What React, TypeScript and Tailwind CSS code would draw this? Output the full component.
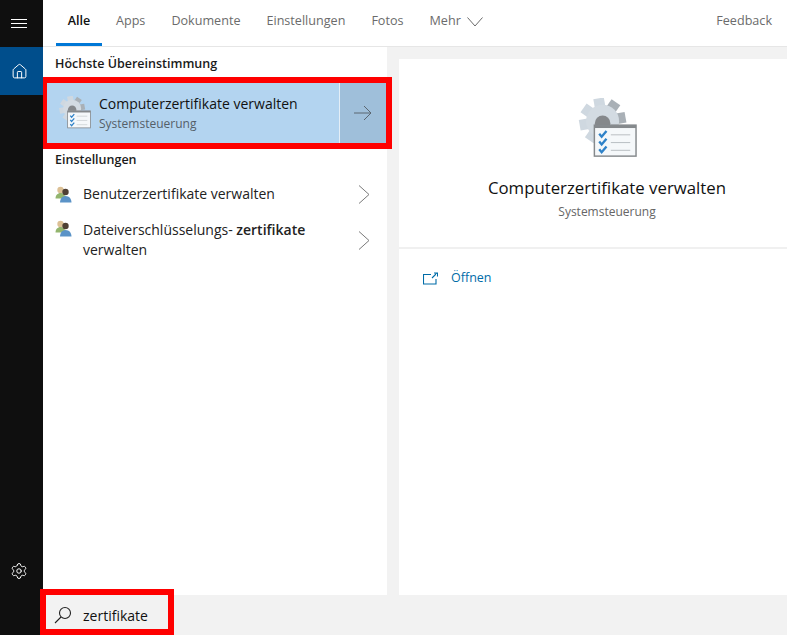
import { Home, Settings } from 'lucide-react';

const tabs = ['Apps', 'Dokumente', 'Einstellungen', 'Fotos'];

// Gear behind a checklist window, used in small and large size
function CertIcon({ size }: { size: number }) {
    const teeth = [0, 45, 90, 135, 180, 225, 270, 315];
    return (
        <svg width={size} height={size} viewBox="0 0 64 64" className="shrink-0">
            {teeth.map(a => (
                <rect
                    key={a}
                    x="23"
                    y="0"
                    width="11"
                    height="12"
                    fill={a > 0 && a < 140 ? '#a9b0b6' : '#cfd8e0'}
                    transform={`rotate(${a - 10} 28.500 24)`}
                />
            ))}
            <circle cx="28.500" cy="24" r="17" fill="#d3dbe2" />
            <circle cx="28.500" cy="26" r="8" fill="#85888b" />
            <rect x="20" y="28" width="43" height="32" fill="#f5f8fa" stroke="#85898c" strokeWidth="1.5" />
            <rect x="20" y="28" width="43" height="3" fill="#85898c" />
            {[37, 45, 53].map(y => (
                <g key={y}>
                    <path d={`M25 ${y}l2.5 3 5-6`} fill="none" stroke="#2f82c8" strokeWidth="2.4" />
                    <path d={`M37 ${y + 1}h20`} stroke="#b8bdc1" strokeWidth="1" />
                </g>
            ))}
        </svg>
    );
}

function UsersIcon() {
    return (
        <svg width="17" height="17" viewBox="0 0 17 17" className="shrink-0">
            <circle cx="5.500" cy="4" r="3.200" fill="#dcc095" />
            <path d="M0.500 12.500c0-3.200 2.200-5.500 5-5.500s5 2.300 5 5.500z" fill="#93b56e" />
            <circle cx="10.500" cy="6" r="3.200" fill="#4f4034" />
            <path d="M5 16.500c0-3.700 2.400-6.500 5.700-6.500s5.800 2.800 5.800 6.500z" fill="#5b93c7" />
        </svg>
    );
}

function RowChevron() {
    return (
        <svg width="12" height="19" viewBox="0 0 12 19" fill="none" stroke="#7a7a7a" strokeWidth="1" className="shrink-0">
            <path d="M1 .5l10 9-10 9" />
        </svg>
    );
}

export default function App() {
    return (
        <div
            className="relative flex h-[635px] w-[787px] overflow-hidden bg-white"
            style={{ fontFamily: '"Open Sans", "Noto Sans", sans-serif' }}
        >
            {/* Sidebar */}
            <aside className="flex w-[43px] shrink-0 flex-col bg-[#0f0f0f] text-white">
                <div className="flex h-[47px] items-center justify-center pr-[5px]">
                    <svg width="16" height="9" viewBox="0 0 16 9" stroke="#fff" strokeWidth="1">
                        <path d="M0 .5h16M0 4.500h16M0 8.500h16" />
                    </svg>
                </div>
                <div className="flex h-[48px] items-center justify-center bg-[#004e8c] pr-[5px]">
                    <Home size={17} strokeWidth={1.4} />
                </div>
                <div className="mt-auto mb-[55px] flex justify-center pr-[5px]">
                    <Settings size={18} strokeWidth={1.3} />
                </div>
            </aside>

            <div className="flex min-w-0 flex-1 flex-col">
                {/* Tabs */}
                <nav className="flex h-[47px] shrink-0 items-stretch border-b border-[#e6e6e6] pr-[15px] pl-[13px] text-[12.6px] text-[#6b6b6b]">
                    <div className="flex w-[46px] items-center justify-center border-b-[3px] border-[#0078d7] font-semibold text-[#111]">
                        Alle
                    </div>
                    {tabs.map((t, i) => (
                        <div key={t} className={`flex items-center pb-[3px] ${i === 0 ? 'ml-[14px]' : 'ml-[26px]'}`}>
                            {t}
                        </div>
                    ))}
                    <div className="ml-[26px] flex items-center gap-[6px] pb-[3px]">
                        Mehr
                        <svg width="16" height="10" viewBox="0 0 16 10" fill="none" stroke="#6b6b6b" strokeWidth="1">
                            <path d="M.5.500l7.500 8.500 7.500-8.500" />
                        </svg>
                    </div>
                    <div className="ml-auto flex items-center pb-[3px]">Feedback</div>
                </nav>

                <div className="flex min-h-0 flex-1 bg-[#f2f2f2]">
                    {/* Results */}
                    <section className="w-[344px] shrink-0 bg-white">
                        <h2 className="mt-[7px] ml-[12px] pt-[1px] text-[12.5px] leading-[18px] font-semibold text-[#1a1a1a]">
                            Höchste Übereinstimmung
                        </h2>
                        <div className="relative z-10 mt-[4px] -mr-[5px] flex h-[72px] border-[6px] border-l-[4px] border-[#ff0000] bg-[#b3d4f0]">
                            <div className="flex flex-1 items-center pl-[10px]">
                                <CertIcon size={34} />
                                <div className="ml-[8px]">
                                    <div className="text-[14px] leading-[20px] text-[#111]">Computerzertifikate verwalten</div>
                                    <div className="mt-[2px] text-[12px] leading-[16px] text-[#555f69]">Systemsteuerung</div>
                                </div>
                            </div>
                            <div className="flex w-[47px] items-center justify-center border-l border-[#e4eef7] bg-[#9fbfda]">
                                <svg width="18" height="16" viewBox="0 0 18 16" fill="none" stroke="#5b6670" strokeWidth="1">
                                    <path d="M0 8h17M10 1l7 7-7 7" />
                                </svg>
                            </div>
                        </div>
                        <h2 className="mt-[2px] ml-[12px] text-[12.5px] leading-[18px] font-semibold text-[#1a1a1a]">
                            Einstellungen
                        </h2>
                        <div className="mt-[15px] flex items-center pr-[17px] pl-[12px] text-[14px] text-[#222]">
                            <UsersIcon />
                            <span className="ml-[11px] flex-1 leading-[20px]">Benutzerzertifikate verwalten</span>
                            <RowChevron />
                        </div>
                        <div className="mt-[16px] flex items-center pr-[17px] pl-[12px] text-[14px] text-[#222]">
                            <div className="self-start">
                                <UsersIcon />
                            </div>
                            <span className="ml-[11px] flex-1 leading-[20px]">
                                Dateiverschlüsselungs- <b className="font-semibold">zertifikate</b>
                                <br />
                                verwalten
                            </span>
                            <RowChevron />
                        </div>
                    </section>

                    {/* Preview */}
                    <section className="mt-[12px] ml-[12px] flex-1 bg-white">
                        <div className="flex h-[190px] flex-col items-center border-b-2 border-[#f0f0f0] pt-[39px] pl-[28px]">
                            <div className="-ml-[3px] h-[62px]">
                                <CertIcon size={62} />
                            </div>
                            <div className="mt-[16px] text-[16.8px] leading-[24px] text-[#111]">Computerzertifikate verwalten</div>
                            <div className="mt-[4px] text-[12px] leading-[16px] text-[#666]">Systemsteuerung</div>
                        </div>
                        <div className="mt-[20px] ml-[24px] flex items-center gap-[13px] text-[12.5px] leading-[18px] text-[#006ca8]">
                            <svg width="15" height="13" viewBox="0 0 15 13" fill="none" stroke="#006ca8" strokeWidth="1.100">
                                <path d="M8 2.500H.5v9.500h12.500V7" />
                                <path d="M9 6l4.500-4.500M11 1h3.500v3.500" />
                            </svg>
                            Öffnen
                        </div>
                    </section>
                </div>

                {/* Search bar */}
                <div className="h-[40px] shrink-0 bg-[#f2f2f2]" />
            </div>

            {/* Red marker around the search box */}
            <div className="absolute top-[589px] left-[40px] flex h-[46px] w-[134px] items-center border-[6px] border-[#ff0000] bg-[#f2f2f2] pt-[6px] pl-[7px] text-[14px] text-[#111]">
                <svg width="20" height="20" viewBox="0 0 20 20" fill="none" stroke="#222" strokeWidth="1.100">
                    <circle cx="12" cy="8" r="5.500" />
                    <path d="M8 12l-6 6" />
                </svg>
                <span className="ml-[10px]">zertifikate</span>
            </div>
        </div>
    );
}
